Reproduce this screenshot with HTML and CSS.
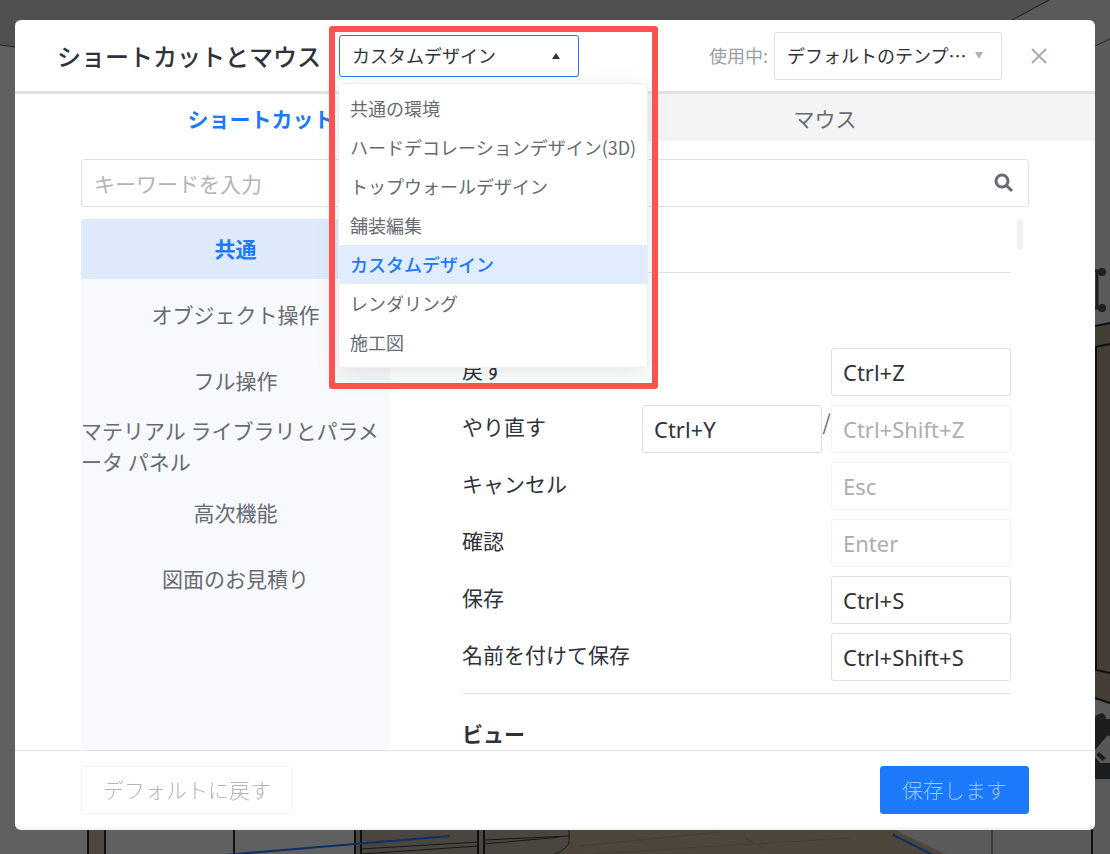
FILE: index.html
```html
<!DOCTYPE html>
<html lang="ja">
<head>
    <meta charset="UTF-8">
    <meta name="viewport" content="width=device-width, initial-scale=1.0">
    <title>ショートカットとマウス</title>
    <link rel="stylesheet" href="styles.css">
</head>
<body>

    <!-- Dimmed 3D scene behind the dialog -->
    <svg class="scene" viewBox="0 0 1110 854" preserveAspectRatio="none" aria-hidden="true">
        <rect width="1110" height="854" fill="#606060"/>
        <path d="M0 0H1052L1013 20H15V47L0 45Z" fill="#505050"/>
        <path d="M1052 0H1110V39L1095 47V20H1013Z" fill="#5a5a5a"/>
        <path d="M1095 47L1110 39V854H945L893 829H1095Z" fill="#5a5a5a"/>
        <path d="M0 45L15 47M1049 0L1012 20M1095 46L1110 39" stroke="#222" fill="none"/>
        <!-- cabinet on the right -->
        <path d="M1095 271H1104M1097 271V309M1095 308H1104" stroke="#1c1e20" stroke-width="3" fill="none"/>
        <circle cx="1102" cy="272" r="4" fill="#1c1e20"/>
        <circle cx="1102" cy="308" r="4" fill="#1c1e20"/>
        <path d="M1095 326L1110 323V704L1095 699Z" fill="#453e37"/>
        <path d="M1095 326L1110 323M1095 347L1110 344M1096 347V670L1110 673M1095 698L1110 703" stroke="#0d1114" stroke-width="2" fill="none"/>
        <path d="M1095 716L1099 714Q1105 711 1106 719H1095Z" fill="#1c1e20"/>
        <rect x="1095" y="719" width="15" height="60" fill="#1b1c1e"/>
        <path d="M1095 750L1108 735L1110 737V763H1100L1095 757Z" fill="#555759"/>
        <path d="M1096 755L1099 752L1106 758L1103 761Z" fill="#1b1c1e"/>
        <!-- floor and furniture along the bottom -->
        <rect x="88" y="829" width="18" height="25" fill="#4d4742"/>
        <path d="M355 829H569V854H355Z" fill="#4a453f"/>
        <path d="M569 829H893L945 854H555Q568 848 569 840Z" fill="#4e453b"/>
        <path d="M580 846L720 832M590 854L850 838M745 838L765 849" stroke="#453d35" fill="none"/>
        <path d="M88 829V854M105 829V854M234 829V854M355 829V857L295 861M361 829V854M478 829V854M484 829V854M1092 829V854" stroke="#0d1114" stroke-width="2" fill="none"/>
        <path d="M361 849L478 842M361 854L478 846M484 840L569 836M484 844L560 837M569 829V843Q564 853 545 857M992 829V854" stroke="#16191b" fill="none"/>
        <path d="M130 863L450 836M893 835L945 861" stroke="#0c2f66" stroke-width="2" fill="none"/>
    </svg>

    <main class="dialog">
        <header class="dialog-header">
            <h1>ショートカットとマウス</h1>
            <div class="env-picker">
                <select class="select select-open" aria-label="環境">
                    <option>共通の環境</option>
                    <option>ハードデコレーションデザイン(3D)</option>
                    <option>トップウォールデザイン</option>
                    <option>舗装編集</option>
                    <option selected>カスタムデザイン</option>
                    <option>レンダリング</option>
                    <option>施工図</option>
                </select>
                <svg class="caret" viewBox="0 0 10 6" aria-hidden="true"><path d="M5 0L9 6H1Z"/></svg>
                <ul class="env-menu">
                    <li>共通の環境</li>
                    <li>ハードデコレーションデザイン(3D)</li>
                    <li>トップウォールデザイン</li>
                    <li>舗装編集</li>
                    <li class="selected">カスタムデザイン</li>
                    <li>レンダリング</li>
                    <li>施工図</li>
                </ul>
                <div class="highlight"></div>
            </div>
            <div class="template-picker">
                <label for="template">使用中:</label>
                <div class="select-wrap">
                    <select class="select" id="template">
                        <option>デフォルトのテンプ…</option>
                    </select>
                    <svg class="caret caret-down" viewBox="0 0 10 8" aria-hidden="true"><path d="M5 7L9 0H1Z"/></svg>
                </div>
            </div>
            <button class="close" aria-label="閉じる">
                <svg width="16" height="16" viewBox="0 0 16 16"><path d="M1 1L15 15M15 1L1 15"/></svg>
            </button>
        </header>

        <nav class="tabs">
            <button class="tab active">ショートカット</button>
            <button class="tab">マウス</button>
        </nav>

        <div class="search">
            <input type="text" placeholder="キーワードを入力" aria-label="キーワードを入力">
            <svg width="20" height="20" viewBox="0 0 20 20" aria-hidden="true"><circle cx="8" cy="8" r="6"/><path d="M12 12L18 18"/></svg>
        </div>

        <div class="content">
            <nav class="sidebar">
                <button class="category active">共通</button>
                <button class="category">オブジェクト操作</button>
                <button class="category">フル操作</button>
                <button class="category">マテリアル ライブラリとパラメータ パネル</button>
                <button class="category">高次機能</button>
                <button class="category">図面のお見積り</button>
            </nav>

            <div class="shortcuts">
                <section class="group group-first">
                    <div class="row">
                        <label for="undo">戻す</label>
                        <input id="undo" type="text" value="Ctrl+Z">
                    </div>
                    <div class="row">
                        <label for="redo">やり直す</label>
                        <input id="redo" type="text" value="Ctrl+Y">
                        <span class="slash">/</span>
                        <input type="text" value="Ctrl+Shift+Z" aria-label="やり直す" disabled>
                    </div>
                    <div class="row">
                        <label for="cancel">キャンセル</label>
                        <input id="cancel" type="text" value="Esc" disabled>
                    </div>
                    <div class="row">
                        <label for="confirm">確認</label>
                        <input id="confirm" type="text" value="Enter" disabled>
                    </div>
                    <div class="row">
                        <label for="save">保存</label>
                        <input id="save" type="text" value="Ctrl+S">
                    </div>
                    <div class="row">
                        <label for="saveAs">名前を付けて保存</label>
                        <input id="saveAs" type="text" value="Ctrl+Shift+S">
                    </div>
                </section>
                <section class="group">
                    <h2>ビュー</h2>
                </section>
            </div>
            <div class="scroll-thumb"></div>
        </div>

        <footer class="dialog-footer">
            <button class="btn" disabled>デフォルトに戻す</button>
            <button class="btn btn-primary" disabled>保存します</button>
        </footer>
    </main>

</body>
</html>
```

FILE: styles.css
```css
* {
    box-sizing: border-box;
}

body {
    margin: 0;
    height: 100vh;
    padding: 20px 15px 24px;
    display: flex;
    overflow: hidden;
    background: #606060;
    color: #2f3238;
    font-family: "Noto Sans CJK JP", sans-serif;
    font-size: 21px;
}

button, input, select {
    font: inherit;
    color: inherit;
    margin: 0;
}

button {
    padding: 0;
    border: 0;
    background: none;
    cursor: pointer;
}

.scene {
    position: fixed;
    top: 0;
    left: 0;
    width: 100%;
    height: 100%;
}

.dialog {
    position: relative;
    flex: 1;
    display: flex;
    flex-direction: column;
    min-width: 0;
    background: #fff;
    border-radius: 6px;
    border-bottom: 2px solid #f0f5f2;
}

/* Header */
.dialog-header {
    display: flex;
    align-items: center;
    height: 74px;
    padding: 0 48px 0 42px;
    border-bottom: 3px solid #e1e1e2;
}

h1 {
    margin: 0 18px 0 0;
    font-size: 24px;
    font-weight: 500;
    white-space: nowrap;
}

.env-picker,
.select-wrap {
    position: relative;
    font-size: 18px;
}

.select {
    display: block;
    appearance: none;
    width: 228px;
    height: 48px;
    padding: 0 12px 2px;
    border: 1px solid #dfe0e2;
    border-radius: 3px;
    background: #fff;
    outline: none;
}

.select-open {
    width: 240px;
    height: 42px;
    border-color: #1c7afa;
}

.caret {
    position: absolute;
    top: 18px;
    right: 18px;
    width: 10px;
    height: 6px;
    fill: #2f3238;
    pointer-events: none;
}

.caret-down {
    top: 20px;
    height: 8px;
    fill: #b0b3b8;
}

.env-menu {
    position: absolute;
    z-index: 2;
    top: 48px;
    left: -1px;
    width: 310px;
    margin: 0;
    padding: 5px 0;
    list-style: none;
    border: 1px solid #ebedee;
    border-radius: 3px;
    background: #fff;
    box-shadow: 0 6px 24px rgba(0, 0, 0, 0.1);
    color: #666a71;
    white-space: nowrap;
}

.env-menu li {
    height: 39px;
    line-height: 39px;
    padding: 0 11px;
}

.env-menu .selected {
    background: #e1edff;
    color: #1c7afa;
    font-weight: 500;
}

/* Red frame around the open menu */
.highlight {
    position: absolute;
    z-index: 3;
    top: -9px;
    left: -10px;
    width: 329px;
    height: 363px;
    border: 6px solid #fc5252;
    border-radius: 3px;
    pointer-events: none;
}

.template-picker {
    display: flex;
    align-items: center;
    gap: 6px;
    margin-left: auto;
    font-size: 18px;
}

.template-picker label {
    padding-bottom: 2px;
    color: #9b9ea3;
}

.close {
    display: flex;
    margin-left: 29px;
}

.close svg {
    fill: none;
    stroke: #a9acb1;
    stroke-width: 2;
}

/* Tabs */
.tabs {
    display: grid;
    grid-template-columns: 1fr 1fr;
    height: 47px;
}

.tab {
    background: #f4f4f5;
    color: #666a71;
}

.tab.active {
    padding-right: 48px;
    background: #fff;
    color: #1c7afa;
    font-weight: 700;
}

/* Search */
.search {
    display: flex;
    align-items: center;
    height: 48px;
    margin: 18px 66px 12px;
    padding: 0 14px 0 12px;
    border: 1px solid #dfe0e2;
    border-radius: 3px;
}

.search input {
    flex: 1;
    min-width: 0;
    padding: 0;
    border: 0;
    outline: none;
    background: none;
}

.search input::placeholder {
    color: #b1b4b9;
}

.search svg {
    fill: none;
    stroke: #666a71;
    stroke-width: 3;
}

/* Content */
.content {
    flex: 1;
    min-height: 0;
    display: flex;
    margin: 0 72px 0 66px;
    overflow: hidden;
}

.sidebar {
    width: 309px;
    height: 100%;
    display: flex;
    flex-direction: column;
    gap: 6px;
    border-radius: 2px 2px 6px 6px;
    background: #f8f9fc;
    overflow: hidden;
}

.category {
    display: flex;
    align-items: center;
    justify-content: center;
    height: 60px;
    padding-bottom: 2px;
    flex-shrink: 0;
    line-height: 31px;
    color: #666a71;
    text-align: left;
}

.category.active {
    background: #deeafc;
    color: #1c7afa;
    font-weight: 700;
}

.shortcuts {
    flex: 1;
    margin: 53px 6px 0 72px;
}

.group {
    border-top: 1px solid #e1e2e4;
}

.group-first {
    padding: 75px 0 12px;
}

h2 {
    margin: 0;
    font-size: 21px;
    font-weight: 700;
    line-height: 78px;
}

.row {
    display: flex;
    margin-bottom: 9px;
}

.row:last-child {
    margin-bottom: 0;
}

.row label {
    flex: 1;
    line-height: 42px;
}

.row input {
    width: 180px;
    height: 48px;
    padding: 0 11px;
    border: 1px solid #dfe0e2;
    border-radius: 3px;
    background: #fff;
    font-family: "Noto Sans", sans-serif;
    font-size: 22px;
    outline: none;
}

.row input:disabled {
    border-color: #f2f3f4;
    color: #adadad;
}

.slash {
    width: 9px;
    line-height: 32px;
    text-align: center;
    color: #666a71;
}

.scroll-thumb {
    width: 6px;
    height: 31px;
    border-radius: 3px;
    background: #f0f2f2;
}

/* Footer */
.dialog-footer {
    display: flex;
    align-items: center;
    justify-content: space-between;
    height: 78px;
    padding: 0 66px;
    border-top: 1px solid #dfe0e2;
}

.btn {
    height: 48px;
    padding: 0 21px 2px;
    border: 1px solid #f2f3f4;
    border-radius: 3px;
    color: #b2b4b8;
    font-weight: 300;
}

.btn-primary {
    border-color: #1c7afa;
    background: #1c7afa;
    color: #9cc5ff;
}
```
